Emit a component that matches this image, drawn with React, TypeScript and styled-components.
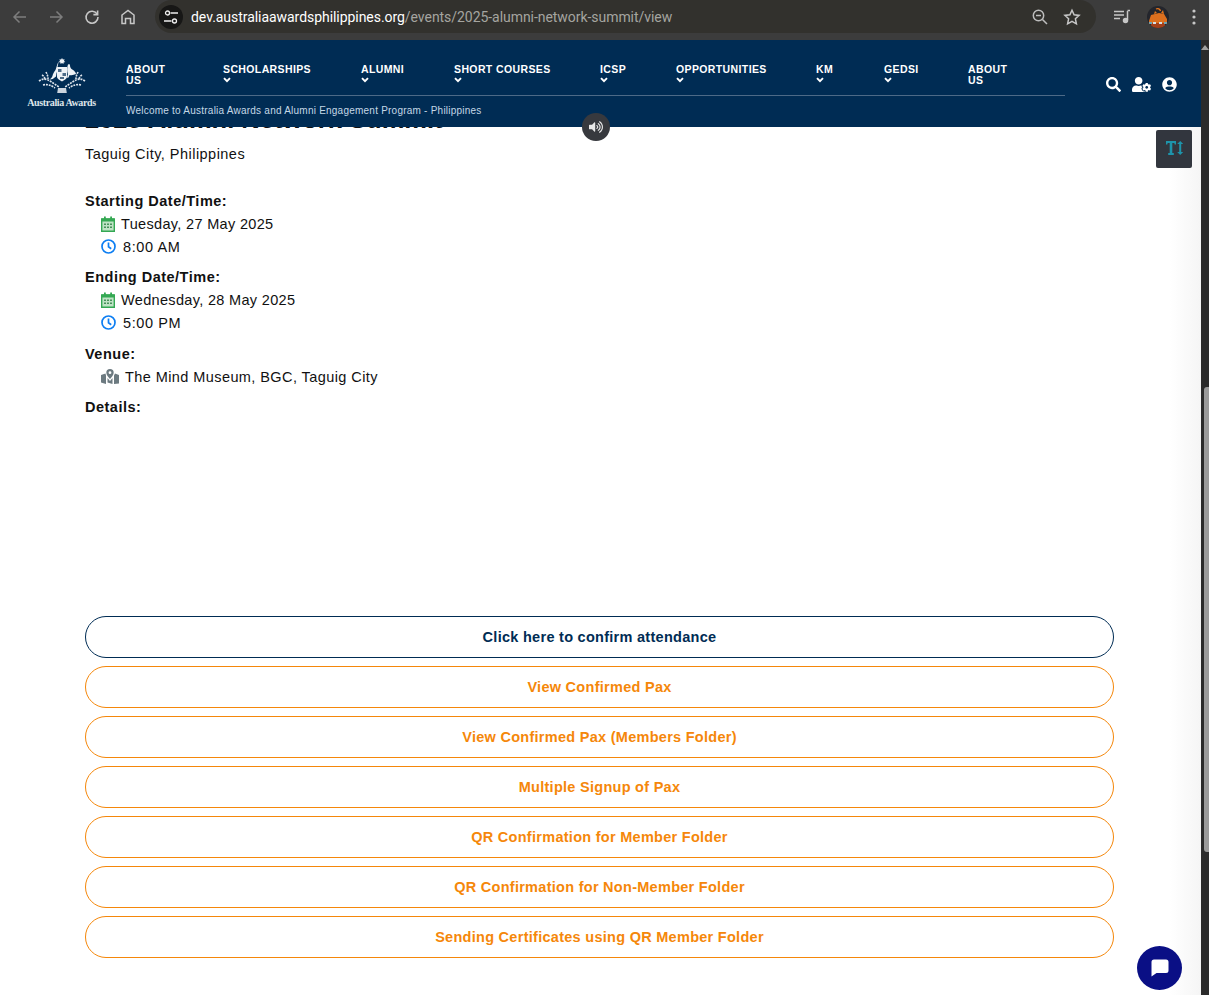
import { ReactNode } from "react";
import styled, { createGlobalStyle } from "styled-components";
import { FaSearch, FaUserCircle, FaUserCog, FaVolumeUp } from "react-icons/fa";

const GlobalStyle = createGlobalStyle`
  html, body {
    margin: 0;
    height: 100%;
    overflow: hidden;
    background: #fff;
  }
  * { box-sizing: border-box; }
`;

const Page = styled.div`
  height: 995px;
  display: flex;
  flex-direction: column;
  font-family: "Liberation Sans", Arial, sans-serif;
  color: #111;
`;

const BrowserBar = styled.div`
  height: 40px;
  flex: none;
  display: flex;
  align-items: flex-start;
  background: #3c3c3c;
  padding-left: 10px;
`;

const NavIcons = styled.div`
  display: flex;
  gap: 16px;
  align-items: center;
  height: 33px;
  width: 145px;
`;

const Omnibox = styled.div`
  width: 941px;
  height: 33px;
  background: #32312d;
  border-radius: 17px;
  display: flex;
  align-items: center;
  padding: 0 15px 0 4px;
  font-family: "Roboto", "Liberation Sans", sans-serif;
  font-size: 14px;
  letter-spacing: -0.05px;
`;

const SiteBadge = styled.div`
  width: 24px;
  height: 24px;
  flex: none;
  border-radius: 50%;
  background: #171716;
  display: flex;
  align-items: center;
  justify-content: center;
  margin-right: 8px;
`;

const Host = styled.span`
  color: #fff;
`;

const UrlPath = styled.span`
  color: #a5a5a0;
  flex: 1;
`;

const OmniIcons = styled.div`
  display: flex;
  gap: 14px;
  align-items: center;
`;

const BrowserTools = styled.div`
  flex: 1;
  height: 33px;
  display: flex;
  align-items: center;
  padding-left: 17px;
`;

const AvatarFrame = styled.div`
  width: 22px;
  height: 22px;
  border-radius: 50%;
  overflow: hidden;
  flex: none;
  margin: 0 23px 0 16px;
`;

const Viewport = styled.div`
  flex: 1;
  min-height: 0;
  display: flex;
`;

const Main = styled.div`
  flex: 1;
  min-width: 0;
  position: relative;
  display: flex;
  flex-direction: column;
  background: linear-gradient(90deg, #fff 1170px, #f5f5f5 1201px);
`;

const Header = styled.header`
  height: 87px;
  flex: none;
  background: #002c54;
  display: flex;
  color: #fff;
  position: relative;
  z-index: 1;
`;

const Logo = styled.div`
  width: 126px;
  flex: none;
  display: flex;
  flex-direction: column;
  align-items: center;
  padding: 18px 3px 0 0;
  font-family: "Liberation Serif", serif;
  font-size: 10px;
  font-weight: 700;
  letter-spacing: -0.38px;
  color: #dfe5ea;
  line-height: 11px;
  gap: 2px;
`;

const NavColumn = styled.div`
  width: 939px;
  flex: none;
  padding-top: 24px;
`;

const NavRow = styled.nav`
  height: 32px;
  display: flex;
  border-bottom: 1px solid #4d6a87;
`;

const Welcome = styled.div`
  margin-top: 9px;
  font-size: 10px;
  letter-spacing: 0.23px;
  color: #c5d8e6;
  line-height: 12px;
`;

const NavItem = styled.div<{ $width: number }>`
  width: ${(p) => p.$width}px;
  flex: none;
  font-size: 10.5px;
  font-weight: 700;
  letter-spacing: 0.38px;
  line-height: 11px;
  color: #fff;
`;

const Chevron = styled.svg`
  display: block;
  width: 8px;
  height: 6px;
  margin-top: 2px;
`;

const HeaderTools = styled.div`
  flex: 1;
  display: flex;
  align-items: center;
  gap: 11px;
  padding: 2px 0 0 41px;
`;

const SpeakerButton = styled.div`
  position: absolute;
  z-index: 2;
  left: 582px;
  top: 73px;
  width: 28px;
  height: 28px;
  border-radius: 50%;
  background: #37393e;
  display: flex;
  align-items: center;
  justify-content: center;
  color: #e8e8e8;
`;

const FontSizeButton = styled.div`
  position: absolute;
  left: 1156px;
  top: 90px;
  width: 36px;
  height: 38px;
  border-radius: 2px;
  background: #32363e;
  display: flex;
  align-items: center;
  justify-content: center;
  padding-bottom: 2px;
`;

const ChatButton = styled.div`
  position: absolute;
  left: 1137px;
  top: 906px;
  width: 45px;
  height: 44px;
  border-radius: 50%;
  background: #0a0f85;
  display: flex;
  align-items: center;
  justify-content: center;
`;

const Content = styled.main`
  flex: 1;
  min-height: 0;
  padding: 0 87px 0 85px;
`;

const Title = styled.h1`
  margin: -20px 0 0;
  height: 25px;
  font-size: 25.5px;
  line-height: 25px;
  font-weight: 700;
  color: #111;
  white-space: nowrap;
`;

const Location = styled.div`
  margin-top: 14px;
  font-size: 14.5px;
  line-height: 17px;
  letter-spacing: 0.47px;
`;

const Label = styled.div<{ $top: number }>`
  margin: ${(p) => p.$top}px 0 2px;
  font-size: 14.5px;
  font-weight: 700;
  line-height: 17px;
  letter-spacing: 0.5px;
  color: #111;
`;

const InfoRow = styled.div<{ $tracking?: number; $gap?: number }>`
  height: 23px;
  padding-left: 16px;
  display: flex;
  align-items: center;
  gap: ${(p) => p.$gap ?? 6}px;
  font-size: 14.5px;
  letter-spacing: ${(p) => p.$tracking ?? 0.33}px;
`;

const Actions = styled.div`
  margin-top: 200px;
  display: flex;
  flex-direction: column;
  gap: 8px;
`;

const ActionButton = styled.button<{ $primary?: boolean }>`
  height: 42px;
  width: 100%;
  background: #fff;
  border: 1px solid ${(p) => (p.$primary ? "#002c54" : "#f5870a")};
  border-radius: 21px;
  color: ${(p) => (p.$primary ? "#002c54" : "#f5870a")};
  font-family: inherit;
  font-size: 14.5px;
  font-weight: 700;
  letter-spacing: 0.28px;
  padding: 0;
`;

const Scrollbar = styled.div`
  width: 8px;
  flex: none;
  background: #2b2b2b;
  display: flex;
  flex-direction: column;
  align-items: flex-end;
`;

const ScrollArrow = styled.div`
  margin-top: 5px;
  width: 0;
  height: 0;
  border-left: 4px solid transparent;
  border-right: 4px solid transparent;
  border-bottom: 5px solid #a0a0a0;
`;

const ScrollThumb = styled.div`
  margin-top: 337px;
  width: 5px;
  height: 465px;
  background: #9b9b9b;
  border-radius: 3px 0 0 3px;
`;

const NAV_ITEMS: { label: ReactNode; width: number; chevron: boolean }[] = [
  { label: <>ABOUT<br />US</>, width: 97, chevron: false },
  { label: "SCHOLARSHIPS", width: 138, chevron: true },
  { label: "ALUMNI", width: 93, chevron: true },
  { label: "SHORT COURSES", width: 146, chevron: true },
  { label: "ICSP", width: 76, chevron: true },
  { label: "OPPORTUNITIES", width: 140, chevron: true },
  { label: "KM", width: 68, chevron: true },
  { label: "GEDSI", width: 84, chevron: true },
  { label: <>ABOUT<br />US</>, width: 97, chevron: false },
];

const ACTIONS = [
  "View Confirmed Pax",
  "View Confirmed Pax (Members Folder)",
  "Multiple Signup of Pax",
  "QR Confirmation for Member Folder",
  "QR Confirmation for Non-Member Folder",
  "Sending Certificates using QR Member Folder",
];

const Back = () => (
  <svg width="20" height="20" viewBox="0 0 20 20" fill="none" stroke="#7d7d7d" strokeWidth="1.5">
    <path d="M16 10H4.500M9.500 4.500 4 10l5.500 5.500" />
  </svg>
);

const Forward = () => (
  <svg width="20" height="20" viewBox="0 0 20 20" fill="none" stroke="#7d7d7d" strokeWidth="1.5">
    <path d="M4 10h11.500M10.500 4.500 16 10l-5.500 5.500" />
  </svg>
);

const Reload = () => (
  <svg width="20" height="20" viewBox="0 0 20 20" fill="none" stroke="#c7c7c7" strokeWidth="1.6">
    <path d="M15.200 7.200A6 6 0 1 0 16 10" />
    <path d="M15.600 3.400v4.200h-4.200" />
  </svg>
);

const Home = () => (
  <svg width="20" height="20" viewBox="0 0 20 20" fill="none" stroke="#c7c7c7" strokeWidth="1.500">
    <path d="M4 16.500V8l6-4.500L16 8v8.500h-3.500v-5h-5v5z" />
  </svg>
);

const Tune = () => (
  <svg width="16" height="16" viewBox="0 0 16 16" fill="none" stroke="#eee" strokeWidth="1.300">
    <circle cx="4.500" cy="4" r="2" />
    <path d="M7.500 4H15M1 12h7.500" />
    <circle cx="11.500" cy="12" r="2" />
  </svg>
);

const ZoomIcon = () => (
  <svg width="18" height="18" viewBox="0 0 18 18" fill="none" stroke="#bdbdbd" strokeWidth="1.500">
    <circle cx="7.500" cy="7.500" r="5.200" />
    <path d="M11.500 11.500 16 16M5 7.500h5" />
  </svg>
);

const Star = () => (
  <svg width="18" height="18" viewBox="0 0 18 18" fill="none" stroke="#c7c7c7" strokeWidth="1.500">
    <path d="M9 2.200l2.100 4.600 5 .6-3.700 3.400 1 5L9 13.300l-4.400 2.500 1-5L1.900 7.400l5-.6z" />
  </svg>
);

const Media = () => (
  <svg width="18" height="18" viewBox="0 0 18 18" fill="none" stroke="#c7c7c7" strokeWidth="1.500">
    <path d="M1 3.500h10M1 7h10M1 10.500h6" />
    <path d="M14.500 3v9" />
    <path d="M14.500 2.500h2.500" />
    <circle cx="12.500" cy="12.500" r="2" fill="#c7c7c7" />
  </svg>
);

const Avatar = () => (
  <svg width="22" height="22" viewBox="0 0 22 22">
    <rect width="22" height="22" fill="#23252c" />
    <path d="M2 15l2-6 4-1 4-1 5 1 3 5v5H2z" fill="#dc6f1e" />
    <path d="M7 8l1-3 2 2zM14 7l2-3 1 4z" fill="#e5761c" />
    <path d="M4 17h14v5H4z" fill="#a3401a" />
    <path d="M6 16h3v2H6zM12 16h3v2h-3z" fill="#d6dfe4" />
    <path d="M2 16h3v2H2zM17 16h3v2h-3z" fill="#6fa5b5" />
    <path d="M9 3c2-1 4 0 4.500 2" fill="none" stroke="#e5761c" strokeWidth="1.300" />
  </svg>
);

const Dots = () => (
  <svg width="4" height="16" viewBox="0 0 4 16" fill="#c7c7c7">
    <circle cx="2" cy="2" r="1.600" />
    <circle cx="2" cy="8" r="1.600" />
    <circle cx="2" cy="14" r="1.600" />
  </svg>
);

const Crest = () => (
  <svg width="50" height="37" viewBox="0 0 50 37" fill="#eef2f6">
    <path d="M25 0l.9 1.600 1.700-.4-.6 1.700 1.300 1.100-1.700.4-.2 1.700-1.400-1-1.400 1-.2-1.700-1.700-.4 1.300-1.100-.6-1.700 1.700.4z" />
    <path d="M21.500 3.500c-1.500 3-2 6-3 8.500-1.200 1.800-2.600 3.500-3 5.700-.2 1.400-1.500 2.800-3 3.800l3.200-.6 3.300-2.400.6-4 .9.1-.2-4.500.8-3.800.5-2.600z" />
    <path d="M31 6.600c1.500-.6 2-.1 2 .9 0 2 1 3.200 2.700 4.200 2 1.300 3.300 3 3.300 4.300-2 1-4.500 1.500-6.500.9l-1 2.600-1.500.3.900-3.500c-1-3-1-6.700.1-9.700z" />
    <path d="M20 9h10v9.500c0 2.500-3 3.700-5 5-2-1.300-5-2.500-5-5z" />
    <path d="M21 11h3.500v3H21zM25.500 15h3.500v3h-3.500zM23 19h4v2h-4z" fill="#4b6a87" />
    <g fill="none" stroke="#dfe6ed" strokeWidth="1.600" strokeDasharray="2 .9">
      <path d="M2 23c4-3 8-2 11 0 3 2 6 4 9 6" />
      <path d="M48 23c-4-3-8-2-11 0-3 2-6 4-9 6" />
      <path d="M5 17c2 1 3 3 3 5M9 14c1 2 2 4 2 7" />
      <path d="M45 17c-2 1-3 3-3 5M41 14c-1 2-2 4-2 7" />
      <path d="M6 27c4-1 8 0 12 3M44 27c-4-1-8 0-12 3" />
    </g>
    <path d="M21 30h8l.8 5H20.200z" opacity=".85" />
  </svg>
);

const ChevronIcon = () => (
  <Chevron viewBox="0 0 8 6" fill="none" stroke="#fff" strokeWidth="1.900">
    <path d="M1 1.200l3 3 3-3" />
  </Chevron>
);

const Calendar = () => (
  <svg width="14" height="16" viewBox="0 0 14 16">
    <path d="M.7 3h12.600v12.300H.7z" fill="#bfe3c5" stroke="#34a853" strokeWidth="1.400" />
    <path d="M.7 2.500h12.600v3H.7z" fill="#34a853" />
    <path d="M3 .5h1.800v3H3zM9.200.5H11v3H9.200z" fill="#34a853" />
    <path d="M3.200 7.500h1.600v1.400H3.200zM6.200 7.500h1.600v1.400H6.200zM9.200 7.500h1.600v1.400H9.200zM3.200 10.500h1.600v1.400H3.200zM6.200 10.500h1.600v1.400H6.200zM9.200 10.500h1.600v1.400H9.200z" fill="#2b7d41" />
  </svg>
);

const Clock = () => (
  <svg width="15" height="15" viewBox="0 0 15 15" fill="none" stroke="#0d7ef2" strokeWidth="1.700">
    <circle cx="7.500" cy="7.500" r="6.500" />
    <path d="M7.500 3.500v4.300l2.700 2" />
  </svg>
);

const MapPin = () => (
  <svg width="18" height="15" viewBox="0 0 18 15" fill="#6c7a80">
    <path fillRule="evenodd" d="M9 0a3.700 3.700 0 0 1 3.700 3.700C12.700 6 10.200 8.500 9 10 7.800 8.500 5.300 6 5.300 3.700A3.700 3.700 0 0 1 9 0zm0 2.300a1.400 1.400 0 1 0 0 2.800 1.400 1.400 0 0 0 0-2.800z" />
    <path d="M0 6l4.500-1.500L5 6.500V15l-5 -1.500zM6.500 9l2.500 3 2.500-3V15l-5-1.500zM13 6.500l1-2 4 1.500v8.500L13 15z" />
  </svg>
);

const FontSizeIcon = () => (
  <svg width="17" height="14" viewBox="0 0 17 14" fill="#1e94ab">
    <path d="M0 0h10v3.500H8.700L8.300 2H6.300v10h1.500v2H2.200v-2h1.500V2H1.700L1.300 3.500H0z" />
    <path d="M13.200 3h-2l3-3 3 3h-2v8h2l-3 3-3-3h2z" />
  </svg>
);

const ChatIcon = () => (
  <svg width="18" height="18" viewBox="0 0 18 18" fill="#fff">
    <path d="M3 .5h12A2.500 2.500 0 0 1 17.500 3v8.500a2.500 2.500 0 0 1-2.500 2.500H5.500L.5 17.500V3A2.500 2.500 0 0 1 3 .5z" />
  </svg>
);

const App = () => (
  <Page>
    <GlobalStyle />
    <BrowserBar>
      <NavIcons>
        <Back />
        <Forward />
        <Reload />
        <Home />
      </NavIcons>
      <Omnibox>
        <SiteBadge><Tune /></SiteBadge>
        <Host>dev.australiaawardsphilippines.org</Host>
        <UrlPath>/events/2025-alumni-network-summit/view</UrlPath>
        <OmniIcons>
          <ZoomIcon />
          <Star />
        </OmniIcons>
      </Omnibox>
      <BrowserTools>
        <Media />
        <AvatarFrame><Avatar /></AvatarFrame>
        <Dots />
      </BrowserTools>
    </BrowserBar>
    <Viewport>
      <Main>
        <Header>
          <Logo>
            <Crest />
            <span>Australia Awards</span>
          </Logo>
          <NavColumn>
            <NavRow>
              {NAV_ITEMS.map((item, i) => (
                <NavItem key={i} $width={item.width}>
                  {item.label}
                  {item.chevron && <ChevronIcon />}
                </NavItem>
              ))}
            </NavRow>
            <Welcome>Welcome to Australia Awards and Alumni Engagement Program - Philippines</Welcome>
          </NavColumn>
          <HeaderTools>
            <FaSearch size={15} />
            <FaUserCog size={19} />
            <FaUserCircle size={15} />
          </HeaderTools>
        </Header>
        <Content>
          <Title>2025 Alumni Network Summit</Title>
          <Location>Taguig City, Philippines</Location>
          <Label $top={30}>Starting Date/Time:</Label>
          <InfoRow><Calendar />Tuesday, 27 May 2025</InfoRow>
          <InfoRow $gap={7} $tracking={0.6}><Clock />8:00 AM</InfoRow>
          <Label $top={11}>Ending Date/Time:</Label>
          <InfoRow><Calendar />Wednesday, 28 May 2025</InfoRow>
          <InfoRow $gap={7} $tracking={0.6}><Clock />5:00 PM</InfoRow>
          <Label $top={12}>Venue:</Label>
          <InfoRow $tracking={0.42}><MapPin />The Mind Museum, BGC, Taguig City</InfoRow>
          <Label $top={11}>Details:</Label>
          <Actions>
            <ActionButton $primary>Click here to confirm attendance</ActionButton>
            {ACTIONS.map((label) => (
              <ActionButton key={label}>{label}</ActionButton>
            ))}
          </Actions>
        </Content>
        <SpeakerButton><FaVolumeUp size={14} /></SpeakerButton>
        <FontSizeButton><FontSizeIcon /></FontSizeButton>
        <ChatButton><ChatIcon /></ChatButton>
      </Main>
      <Scrollbar>
        <ScrollArrow />
        <ScrollThumb />
      </Scrollbar>
    </Viewport>
  </Page>
);

export default App;
